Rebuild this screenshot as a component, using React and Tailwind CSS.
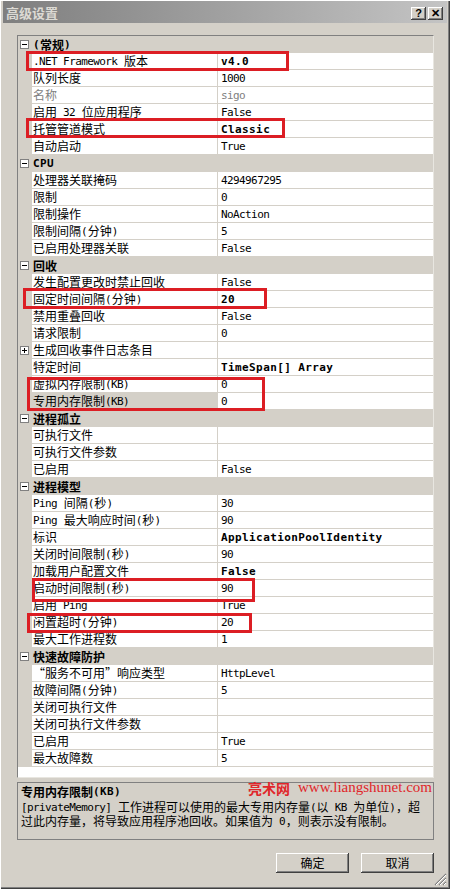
import React from "react";

function T({ s, bold }) {
  const parts = s.match(/[\x00-\x7F]+|[^\x00-\x7F]+/g) || [];
  return parts.map((p, i) =>
    /[\x00-\x7F]/.test(p[0]) ? (
      <span
        key={i}
        className={
          bold
            ? "font-['DejaVu_Sans_Mono',monospace] text-[11px] whitespace-pre font-bold tracking-[0.4px]"
            : "font-['DejaVu_Sans_Mono',monospace] text-[11px] whitespace-pre tracking-[-0.6px] pr-[0.6px]"
        }
      >
        {p}
      </span>
    ) : (
      <span
        key={i}
        className={
          bold
            ? "font-['Noto_Sans_CJK_SC',sans-serif] text-[12px] font-bold"
            : "font-['Noto_Sans_CJK_SC',sans-serif] text-[12px]"
        }
      >
        {p}
      </span>
    )
  );
}

function Box({ plus }) {
  return (
    <div className="relative w-[9px] h-[9px] border border-[#808080] bg-white">
      <div className="absolute left-[1px] top-[3px] w-[5px] h-[1px] bg-black" />
      {plus && <div className="absolute left-[3px] top-[1px] w-[1px] h-[5px] bg-black" />}
    </div>
  );
}

const data = [
  { cat: "(常规)" },
  { n: ".NET Framework 版本", v: "v4.0", vb: true },
  { n: "队列长度", v: "1000" },
  { n: "名称", v: "sigo", gray: true },
  { n: "启用 32 位应用程序", v: "False" },
  { n: "托管管道模式", v: "Classic", vb: true },
  { n: "自动启动", v: "True" },
  { cat: "CPU" },
  { n: "处理器关联掩码", v: "4294967295" },
  { n: "限制", v: "0" },
  { n: "限制操作", v: "NoAction" },
  { n: "限制间隔(分钟)", v: "5" },
  { n: "已启用处理器关联", v: "False" },
  { cat: "回收" },
  { n: "发生配置更改时禁止回收", v: "False" },
  { n: "固定时间间隔(分钟)", v: "20", vb: true },
  { n: "禁用重叠回收", v: "False" },
  { n: "请求限制", v: "0" },
  { n: "生成回收事件日志条目", v: "", plus: true },
  { n: "特定时间", v: "TimeSpan[] Array", vb: true },
  { n: "虚拟内存限制(KB)", v: "0" },
  { n: "专用内存限制(KB)", v: "0", sel: true },
  { cat: "进程孤立" },
  { n: "可执行文件", v: "" },
  { n: "可执行文件参数", v: "" },
  { n: "已启用", v: "False" },
  { cat: "进程模型" },
  { n: "Ping 间隔(秒)", v: "30" },
  { n: "Ping 最大响应时间(秒)", v: "90" },
  { n: "标识", v: "ApplicationPoolIdentity", vb: true },
  { n: "关闭时间限制(秒)", v: "90" },
  { n: "加载用户配置文件", v: "False", vb: true },
  { n: "启动时间限制(秒)", v: "90" },
  { n: "启用 Ping", v: "True" },
  { n: "闲置超时(分钟)", v: "20" },
  { n: "最大工作进程数", v: "1" },
  { cat: "快速故障防护" },
  { n: "“服务不可用”响应类型", v: "HttpLevel" },
  { n: "故障间隔(分钟)", v: "5" },
  { n: "关闭可执行文件", v: "" },
  { n: "关闭可执行文件参数", v: "" },
  { n: "已启用", v: "True" },
  { n: "最大故障数", v: "5" },
];

function Cat({ s }) {
  return (
    <div className="flex h-[17px] bg-[#d4d0c8] items-center text-black">
      <div className="w-[14px] shrink-0 flex items-center pl-[2px]">
        <Box />
      </div>
      <div className="pl-[1px] flex items-center leading-none">
        <T s={s} bold />
      </div>
    </div>
  );
}

function Row({ r }) {
  const color = r.gray ? "text-[#808080]" : "text-black";
  return (
    <div className={"flex h-[17px] " + color}>
      <div className="w-[14px] shrink-0 bg-[#d4d0c8] flex items-center pl-[2px]">
        {r.plus && <Box plus />}
      </div>
      <div
        className={
          r.sel
            ? "w-[185px] shrink-0 border-b border-[#d4d0c8] bg-[#d4d0c8] flex items-center pl-[1px] leading-none whitespace-nowrap overflow-hidden"
            : "w-[185px] shrink-0 border-b border-[#d4d0c8] bg-white flex items-center pl-[1px] leading-none whitespace-nowrap overflow-hidden"
        }
      >
        <T s={r.n} />
      </div>
      <div className="w-[1px] shrink-0 bg-[#d4d0c8]" />
      <div className="flex-1 border-b border-[#d4d0c8] bg-white flex items-center pl-[3px] leading-none whitespace-nowrap overflow-hidden">
        <T s={r.v} bold={r.vb} />
      </div>
    </div>
  );
}

function TitleBtn({ children }) {
  return (
    <div className="w-[15px] h-[13px] bg-[#d4d0c8] shadow-[inset_-1px_-1px_0_#404040,inset_1px_1px_0_#ffffff,inset_-2px_-2px_0_#808080] flex items-center justify-center text-black font-bold text-[11px] leading-none font-['Liberation_Sans',sans-serif]">
      {children}
    </div>
  );
}

function Btn({ children }) {
  return (
    <div className="w-[73px] h-[20px] bg-[#d4d0c8] shadow-[inset_-1px_-1px_0_#404040,inset_1px_1px_0_#ffffff,inset_-2px_-2px_0_#808080] flex items-center justify-center text-black leading-none">
      <T s={children} />
    </div>
  );
}

const boxes = [
  "left-[26px] top-[51px] w-[263px] h-[20px]",
  "left-[26px] top-[118px] w-[259px] h-[20px]",
  "left-[23px] top-[288px] w-[244px] h-[21px]",
  "left-[27px] top-[377px] w-[238px] h-[34px]",
  "left-[32px] top-[578px] w-[223px] h-[24px]",
  "left-[27px] top-[613px] w-[225px] h-[20px]",
];

export default function App() {
  return (
    <div className="relative w-[450px] h-[889px] bg-[#d4d0c8] pl-[3px] pr-[3px] pt-[1px] shadow-[inset_1px_1px_0_#ffffff,inset_-1px_-1px_0_#404040,inset_-2px_-2px_0_#808080] overflow-hidden">
      {/* title bar */}
      <div className="h-[22px] bg-linear-to-r from-[#7f7f7f] to-[#c4c4c4] flex items-center justify-between pl-[3px] pr-[4px]">
        <div className="text-[#dcdad4] font-bold text-[13px] font-['Noto_Sans_CJK_SC',sans-serif] leading-none">
          高级设置
        </div>
        <div className="flex gap-[2px] mt-[3px]">
          <TitleBtn>?</TitleBtn>
          <TitleBtn>✕</TitleBtn>
        </div>
      </div>

      <div className="pl-[14px] pr-[13px] pt-[12px]">
        {/* property grid */}
        <div className="h-[743px] border border-t-[#808080] border-l-[#808080] border-r-[#e8e6e0] border-b-[#e8e6e0] bg-white overflow-hidden">
          {data.map((r, i) => (r.cat ? <Cat key={i} s={r.cat} /> : <Row key={i} r={r} />))}
        </div>

        {/* description */}
        <div className="relative mt-[4px] h-[58px] border border-[#808080] bg-[#d4d0c8] pl-[3px] pt-[1px] text-black">
          <div className="leading-none h-[15px] flex items-center">
            <T s="专用内存限制(KB)" bold />
          </div>
          <div className="mt-[1px] leading-none">
            <div className="h-[14px] flex items-center whitespace-nowrap">
              <T s="[privateMemory] 工作进程可以使用的最大专用内存量(以 KB 为单位)，超" />
            </div>
            <div className="h-[14px] flex items-center whitespace-nowrap">
              <T s="过此内存量，将导致应用程序池回收。如果值为 0，则表示没有限制。" />
            </div>
          </div>
          <div className="absolute right-[1px] top-[-3px] flex items-end gap-[8px] text-[#e0262a] leading-none">
            <span className="font-['Noto_Sans_CJK_SC',sans-serif] text-[14px] font-bold">亮术网</span>
            <span className="font-['Liberation_Serif',serif] text-[15px]">www.liangshunet.com</span>
          </div>
        </div>

        {/* buttons */}
        <div className="mt-[13px] flex justify-end gap-[12px]">
          <Btn>确定</Btn>
          <Btn>取消</Btn>
        </div>
      </div>

      {/* size grip */}
      <svg className="absolute right-[3px] bottom-[3px]" width="13" height="13" viewBox="0 0 13 13">
        <path d="M12 1 L1 12 M12 5 L5 12 M12 9 L9 12" stroke="#808080" strokeWidth="1.2" />
        <path d="M12 2 L2 12 M12 6 L6 12 M12 10 L10 12" stroke="#ffffff" strokeWidth="1" />
      </svg>

      {/* annotation boxes */}
      {boxes.map((b, i) => (
        <div key={i} className={"absolute border-[3px] border-[#dc1e24] pointer-events-none " + b} />
      ))}
    </div>
  );
}
